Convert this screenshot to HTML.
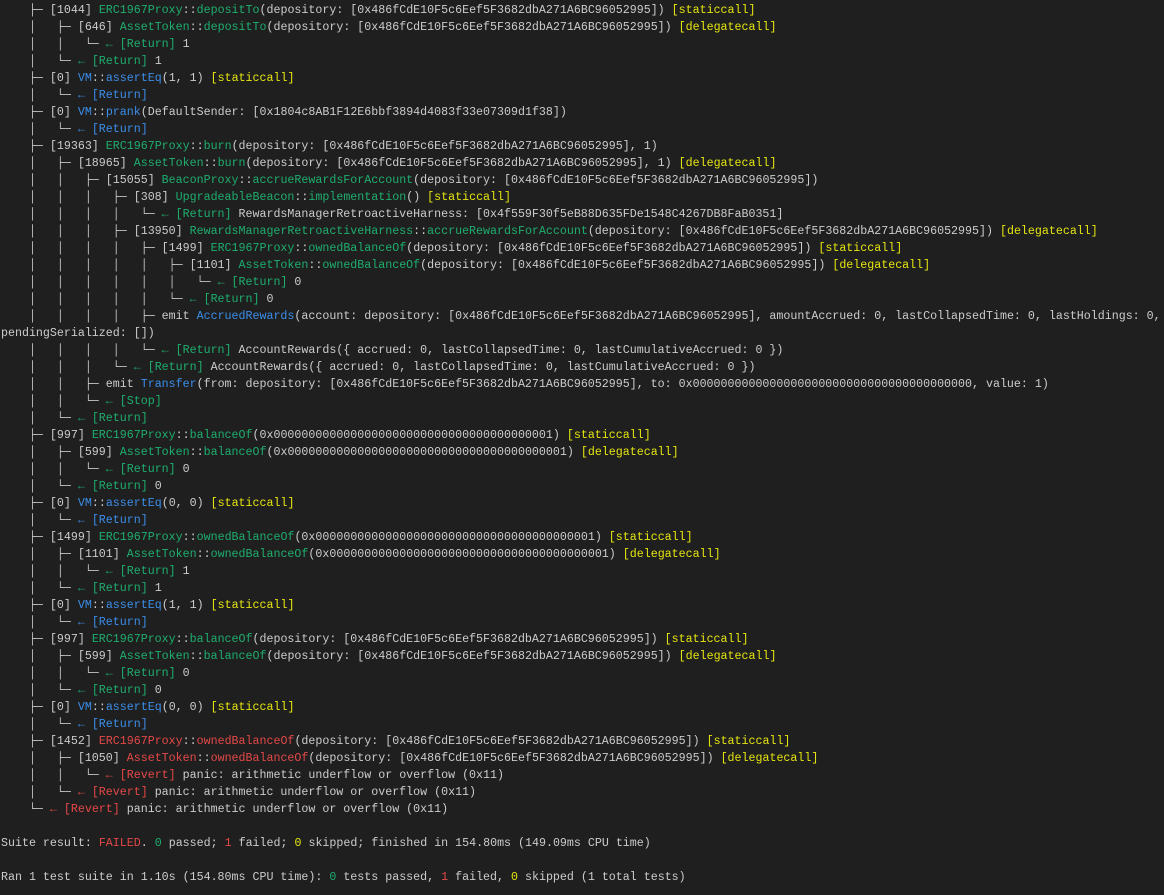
<!DOCTYPE html>
<html><head><meta charset="utf-8"><style>
html,body{margin:0;padding:0;background:#1f1f1f;width:1164px;height:895px;overflow:hidden}
pre{margin:0;padding:2px 0 0 1px;font-family:"Liberation Mono","DejaVu Sans Mono",monospace;font-size:11.65px;line-height:17px;color:#cccccc;white-space:pre}
.g{color:#1fae6e}.b{color:#3b8eea}.y{color:#e5e510}.r{color:#e54848}
</style></head><body><pre>    ├─ [1044] <span class="g">ERC1967Proxy</span>::<span class="g">depositTo</span>(depository: [0x486fCdE10F5c6Eef5F3682dbA271A6BC96052995]) <span class="y">[staticcall]</span>
    │   ├─ [646] <span class="g">AssetToken</span>::<span class="g">depositTo</span>(depository: [0x486fCdE10F5c6Eef5F3682dbA271A6BC96052995]) <span class="y">[delegatecall]</span>
    │   │   └─ <span class="g">← [Return]</span> 1
    │   └─ <span class="g">← [Return]</span> 1
    ├─ [0] <span class="b">VM</span>::<span class="b">assertEq</span>(1, 1) <span class="y">[staticcall]</span>
    │   └─ <span class="b">← [Return]</span>
    ├─ [0] <span class="b">VM</span>::<span class="b">prank</span>(DefaultSender: [0x1804c8AB1F12E6bbf3894d4083f33e07309d1f38])
    │   └─ <span class="b">← [Return]</span>
    ├─ [19363] <span class="g">ERC1967Proxy</span>::<span class="g">burn</span>(depository: [0x486fCdE10F5c6Eef5F3682dbA271A6BC96052995], 1)
    │   ├─ [18965] <span class="g">AssetToken</span>::<span class="g">burn</span>(depository: [0x486fCdE10F5c6Eef5F3682dbA271A6BC96052995], 1) <span class="y">[delegatecall]</span>
    │   │   ├─ [15055] <span class="g">BeaconProxy</span>::<span class="g">accrueRewardsForAccount</span>(depository: [0x486fCdE10F5c6Eef5F3682dbA271A6BC96052995])
    │   │   │   ├─ [308] <span class="g">UpgradeableBeacon</span>::<span class="g">implementation</span>() <span class="y">[staticcall]</span>
    │   │   │   │   └─ <span class="g">← [Return]</span> RewardsManagerRetroactiveHarness: [0x4f559F30f5eB88D635FDe1548C4267DB8FaB0351]
    │   │   │   ├─ [13950] <span class="g">RewardsManagerRetroactiveHarness</span>::<span class="g">accrueRewardsForAccount</span>(depository: [0x486fCdE10F5c6Eef5F3682dbA271A6BC96052995]) <span class="y">[delegatecall]</span>
    │   │   │   │   ├─ [1499] <span class="g">ERC1967Proxy</span>::<span class="g">ownedBalanceOf</span>(depository: [0x486fCdE10F5c6Eef5F3682dbA271A6BC96052995]) <span class="y">[staticcall]</span>
    │   │   │   │   │   ├─ [1101] <span class="g">AssetToken</span>::<span class="g">ownedBalanceOf</span>(depository: [0x486fCdE10F5c6Eef5F3682dbA271A6BC96052995]) <span class="y">[delegatecall]</span>
    │   │   │   │   │   │   └─ <span class="g">← [Return]</span> 0
    │   │   │   │   │   └─ <span class="g">← [Return]</span> 0
    │   │   │   │   ├─ emit <span class="b">AccruedRewards</span>(account: depository: [0x486fCdE10F5c6Eef5F3682dbA271A6BC96052995], amountAccrued: 0, lastCollapsedTime: 0, lastHoldings: 0,
pendingSerialized: [])
    │   │   │   │   └─ <span class="g">← [Return]</span> AccountRewards({ accrued: 0, lastCollapsedTime: 0, lastCumulativeAccrued: 0 })
    │   │   │   └─ <span class="g">← [Return]</span> AccountRewards({ accrued: 0, lastCollapsedTime: 0, lastCumulativeAccrued: 0 })
    │   │   ├─ emit <span class="b">Transfer</span>(from: depository: [0x486fCdE10F5c6Eef5F3682dbA271A6BC96052995], to: 0x0000000000000000000000000000000000000000, value: 1)
    │   │   └─ <span class="g">← [Stop]</span>
    │   └─ <span class="g">← [Return]</span>
    ├─ [997] <span class="g">ERC1967Proxy</span>::<span class="g">balanceOf</span>(0x0000000000000000000000000000000000000001) <span class="y">[staticcall]</span>
    │   ├─ [599] <span class="g">AssetToken</span>::<span class="g">balanceOf</span>(0x0000000000000000000000000000000000000001) <span class="y">[delegatecall]</span>
    │   │   └─ <span class="g">← [Return]</span> 0
    │   └─ <span class="g">← [Return]</span> 0
    ├─ [0] <span class="b">VM</span>::<span class="b">assertEq</span>(0, 0) <span class="y">[staticcall]</span>
    │   └─ <span class="b">← [Return]</span>
    ├─ [1499] <span class="g">ERC1967Proxy</span>::<span class="g">ownedBalanceOf</span>(0x0000000000000000000000000000000000000001) <span class="y">[staticcall]</span>
    │   ├─ [1101] <span class="g">AssetToken</span>::<span class="g">ownedBalanceOf</span>(0x0000000000000000000000000000000000000001) <span class="y">[delegatecall]</span>
    │   │   └─ <span class="g">← [Return]</span> 1
    │   └─ <span class="g">← [Return]</span> 1
    ├─ [0] <span class="b">VM</span>::<span class="b">assertEq</span>(1, 1) <span class="y">[staticcall]</span>
    │   └─ <span class="b">← [Return]</span>
    ├─ [997] <span class="g">ERC1967Proxy</span>::<span class="g">balanceOf</span>(depository: [0x486fCdE10F5c6Eef5F3682dbA271A6BC96052995]) <span class="y">[staticcall]</span>
    │   ├─ [599] <span class="g">AssetToken</span>::<span class="g">balanceOf</span>(depository: [0x486fCdE10F5c6Eef5F3682dbA271A6BC96052995]) <span class="y">[delegatecall]</span>
    │   │   └─ <span class="g">← [Return]</span> 0
    │   └─ <span class="g">← [Return]</span> 0
    ├─ [0] <span class="b">VM</span>::<span class="b">assertEq</span>(0, 0) <span class="y">[staticcall]</span>
    │   └─ <span class="b">← [Return]</span>
    ├─ [1452] <span class="r">ERC1967Proxy</span>::<span class="r">ownedBalanceOf</span>(depository: [0x486fCdE10F5c6Eef5F3682dbA271A6BC96052995]) <span class="y">[staticcall]</span>
    │   ├─ [1050] <span class="r">AssetToken</span>::<span class="r">ownedBalanceOf</span>(depository: [0x486fCdE10F5c6Eef5F3682dbA271A6BC96052995]) <span class="y">[delegatecall]</span>
    │   │   └─ <span class="r">← [Revert]</span> panic: arithmetic underflow or overflow (0x11)
    │   └─ <span class="r">← [Revert]</span> panic: arithmetic underflow or overflow (0x11)
    └─ <span class="r">← [Revert]</span> panic: arithmetic underflow or overflow (0x11)

Suite result: <span class="r">FAILED</span>. <span class="g">0</span> passed; <span class="r">1</span> failed; <span class="y">0</span> skipped; finished in 154.80ms (149.09ms CPU time)

Ran 1 test suite in 1.10s (154.80ms CPU time): <span class="g">0</span> tests passed, <span class="r">1</span> failed, <span class="y">0</span> skipped (1 total tests)
</pre></body></html>
